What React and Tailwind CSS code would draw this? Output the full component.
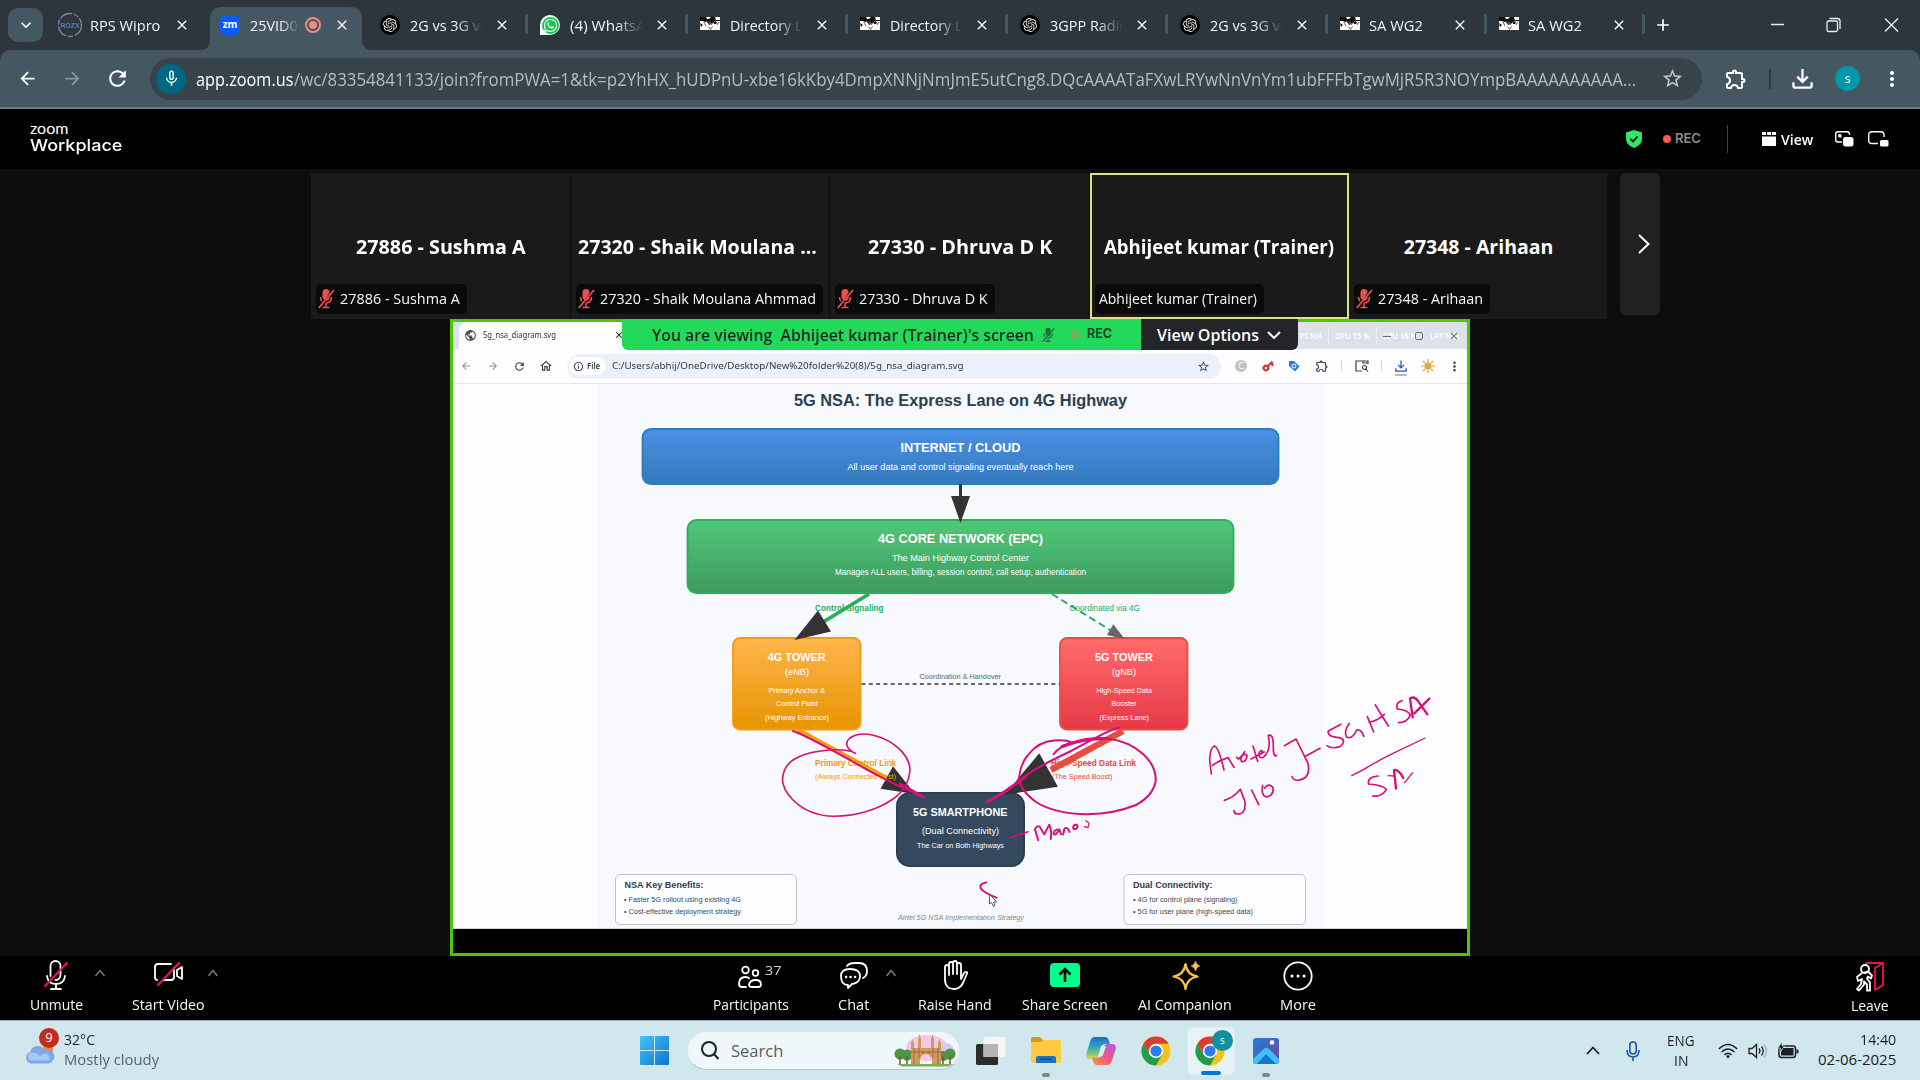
import React, { useLayoutEffect, useRef, useState } from "react";
import {
  MdArrowBack,
  MdArrowForward,
  MdRefresh,
  MdStarBorder,
  MdOutlineExtension,
  MdMoreVert,
  MdMicNone,
  MdClose,
  MdAdd,
  MdKeyboardArrowDown,
  MdOutlineHome,
  MdPublic,
  MdVpnKey,
  MdInfoOutline,
} from "react-icons/md";
import { SiOpenai } from "react-icons/si";
import { FaWhatsapp } from "react-icons/fa";

/* Text squeezed or stretched to an exact advance width. */
function Fit({ w, className = "", children }) {
  const ref = useRef(null);
  const [k, setK] = useState(1);
  useLayoutEffect(() => {
    if (ref.current) setK(w / ref.current.offsetWidth);
  }, [w]);
  return (
    <span className={"block shrink-0 whitespace-pre " + className} style={{ width: w }}>
      <span ref={ref} className="inline-block origin-left" style={{ transform: `scaleX(${k})` }}>
        {children}
      </span>
    </span>
  );
}

/* ---------- browser window ---------- */

function Gpt() {
  return (
    <span className="flex size-5 items-center justify-center rounded-full bg-black">
      <SiOpenai className="size-3.5 text-gray-200" />
    </span>
  );
}
function Gpp() {
  return (
    <svg viewBox="0 0 20 14" className="-mt-0.5 h-3.5 w-5">
      <path fill="#fff" d="M0 0h20v13H0z" />
      <path fill="#111" d="M0 0h6l1 2h2l2-2h4l1 3h4v1h-4v3h-2V5L9 8 7 5H5L3 4H0zM0 6l3 2-2 2z" />
      <path d="M4 5l2 4M9 4l3 4M15 2l2 5M6 4q5 6 9 0M17 8l2-3" stroke="#666" fill="none" />
      <path d="M8.500 9.500l2 3 2-3" stroke="#c33" fill="none" />
    </svg>
  );
}
function Rps() {
  return (
    <svg viewBox="0 0 26 26" className="-mx-[3px] size-[26px]">
      <circle cx="13" cy="13" r="11.500" fill="none" stroke="#7d8a92" strokeWidth="1.300" strokeDasharray="13 2 5 1.500" />
      <text x="3.500" y="16" fontSize="7.500" fontWeight="700" fill="#4d7fca" textLength="19" lengthAdjust="spacingAndGlyphs" fontFamily="Liberation Sans">
        ROZX
      </text>
    </svg>
  );
}
function Zm() {
  return (
    <span className="flex size-5 items-center justify-center rounded-[6px] bg-[#0b5cff] pb-0.5 text-[10px] font-bold text-white">zm</span>
  );
}
function Wa() {
  return (
    <span className="flex size-5 items-center justify-center rounded-full rounded-bl-sm bg-white">
      <span className="flex size-[17px] items-center justify-center rounded-full bg-[#19c552]">
        <FaWhatsapp className="size-[15px] text-white" />
      </span>
    </span>
  );
}

const tabs = [
  { icon: Rps, text: "RPS Wipro", w: 70, cell: "w-[160px]" },
  { icon: Zm, text: "25VID0", w: 48, cell: "w-[160px]", active: true, fade: true },
  { icon: Gpt, text: "2G vs 3G vs", w: 77, cell: "w-[160px]", fade: true },
  { icon: Wa, text: "(4) WhatsA", w: 76, cell: "w-[160px]", fade: true, sep: true },
  { icon: Gpp, text: "Directory Li", w: 76, cell: "w-[160px]", fade: true, sep: true },
  { icon: Gpp, text: "Directory Li", w: 76, cell: "w-[160px]", fade: true, sep: true },
  { icon: Gpt, text: "3GPP Radio", w: 78, cell: "w-[160px]", fade: true, sep: true },
  { icon: Gpt, text: "2G vs 3G vs", w: 77, cell: "w-[160px]", fade: true, sep: true },
  { icon: Gpp, text: "SA WG2", w: 54, cell: "w-[159px]", sep: true, narrow: true },
  { icon: Gpp, text: "SA WG2", w: 54, cell: "w-[158px]", sep: true, narrow: true },
];

function Tab({ t }) {
  const Icon = t.icon;
  return (
    <div className={"relative flex h-[50px] items-center pl-3.5 " + t.cell}>
      {t.sep && <span className="absolute -left-px top-3.5 h-5 w-[3px] rounded bg-[#455761]" />}
      {t.active && (
        <svg className="absolute -left-1.5 top-0 h-[50px] w-[172px]" viewBox="0 0 172 50">
          <path fill="#455761" d="M0 50Q10 50 10 40V20Q10 7 22 7H150Q162 7 162 20V38Q162 50 172 50Z" />
        </svg>
      )}
      <span className={"relative flex shrink-0 items-center " + (t.narrow ? "w-[29px]" : "w-[30px]")}>
        <Icon />
      </span>
      <span
        className={
          "relative overflow-hidden text-[15px] leading-5 text-gray-100 " +
          (t.active ? "w-[49px] " : t.narrow ? "w-[72px] " : "w-[73px] ") +
          (t.fade ? "[mask-image:linear-gradient(to_right,#000_62%,transparent)]" : "")
        }
      >
        <Fit w={t.w}>{t.text}</Fit>
      </span>
      {t.active && (
        <span className="relative ml-1.5 flex size-4 items-center justify-center rounded-full border-2 border-[#f28b82]">
          <span className="size-2 rounded-full bg-[#f28b82]" />
        </span>
      )}
      <MdClose className={"relative size-4 shrink-0 text-white " + (t.active ? "ml-[13px]" : "ml-[11px]")} />
    </div>
  );
}

function Download({ className }) {
  return (
    <svg viewBox="0 0 22 22" className={className} fill="none" stroke="currentColor" strokeWidth="2.400">
      <path d="M11 1v13M5.500 9l5.500 5.500L16.500 9M1.500 15v4.500q0 1 1 1h17q1 0 1-1V15" />
    </svg>
  );
}

function BrowserChrome() {
  return (
    <>
      <div className="flex h-[50px] items-center bg-[#2d363c]">
        <span className="ml-2 mr-[3px] flex h-[34px] w-[35px] shrink-0 items-center justify-center rounded-[10px] bg-[#455761]">
          <MdKeyboardArrowDown className="size-5 text-white" />
        </span>
        {tabs.map((t, i) => (
          <Tab key={i} t={t} />
        ))}
        <div className="relative flex h-[50px] w-[118px] items-center pl-2.5">
          <span className="absolute -left-px top-3.5 h-5 w-[3px] rounded bg-[#455761]" />
          <MdAdd className="size-5 text-white" />
        </div>
        <svg viewBox="0 0 140 20" className="ml-2 h-5 w-[140px]" fill="none" stroke="#eee" strokeWidth="1.300">
          <path d="M2 9.500h13M116 3.500l13 13M129 3.500l-13 13" />
          <rect x="58" y="6" width="10.500" height="10.500" rx="1.500" />
          <path d="M60.500 3.500h8q2.500 0 2.500 2.500v8" />
        </svg>
      </div>
      <div className="bg-[#2d363c]">
        <div className="flex h-[59px] items-center rounded-t-[10px] border-b-2 border-[#6b7f89] bg-[#455761]">
          <MdArrowBack className="ml-[17px] size-[21px] text-white" />
          <MdArrowForward className="ml-6 size-[21px] text-[#8b979e]" />
          <MdRefresh className="ml-[22px] size-[25px] text-white" />
          <div className="ml-5 flex h-[42px] w-[1552px] items-center rounded-full bg-[#37444b]">
            <span className="ml-1.5 flex size-[30px] items-center justify-center rounded-full bg-[#006782]">
              <MdMicNone className="size-[19px] text-white" />
            </span>
            <div className="ml-[10px] flex w-[1440px] text-[17.5px] leading-6 text-[#b3bcc1]">
              <Fit w={97.5} className="text-white">app.zoom.us</Fit>
              <Fit w={1342}>
                /wc/83354841133/join?fromPWA=1&tk=p2YhHX_hUDPnU-xbe16kKby4DmpXNNjNmJmE5utCng8.DQcAAAATaFXwLRYwNnVnYm1ubFFFbTgwMjR5R3NOYmpBAAAAAAAAAA...
              </Fit>
            </div>
            <MdStarBorder className="ml-[25px] size-[23px] text-[#c4c9cc]" />
          </div>
          <MdOutlineExtension className="ml-[22px] size-[24px] text-white" />
          <span className="ml-[21px] h-5 w-0.5 bg-[#2d3b42]" />
          <Download className="ml-[21px] size-[21px] text-white" />
          <span className="ml-[22px] flex size-[25px] items-center justify-center rounded-full bg-[#0097a7] text-xs text-white">s</span>
          <MdMoreVert className="ml-5 size-6 text-white" />
        </div>
      </div>
    </>
  );
}

/* ---------- meeting ---------- */

function MeetingHeader() {
  return (
    <div className="flex h-[60px] items-center bg-black">
      <div className="-mt-[5px] ml-[30px] flex w-[1596px] flex-col text-white">
        <Fit w={38} className="h-[14px] font-[Lato] text-[16px] leading-[13px]">zoom</Fit>
        <Fit w={93} className="h-[18px] font-['Inter'] text-[16.5px] font-medium leading-[20px]">Workplace</Fit>
      </div>
      <svg viewBox="0 0 16 18" className="h-[18px] w-4">
        <path fill="#2ee868" d="M8 0l8 2.500V9q0 6-8 9Q0 15 0 9V2.500z" />
        <path d="M4.500 9l2.500 2.500 4.500-5" stroke="#000" strokeWidth="1.800" fill="none" />
      </svg>
      <span className="ml-[21px] size-2 rounded-full bg-[#ff5a50]" />
      <Fit w={26} className="ml-1 font-[Inter] text-[13px] font-semibold text-[#8c8c8c]">REC</Fit>
      <span className="ml-[26px] h-7 w-px bg-[#444]" />
      <svg viewBox="0 0 14 14" className="ml-[34px] size-3.5" fill="#fff">
        <path d="M0 0h4v3H0zM5 0h4v3H5zM10 0h4v3h-4zM0 4.500h14V14H0z" />
      </svg>
      <Fit w={32} className="ml-[5px] text-[15px] font-semibold text-white">View</Fit>
      <svg viewBox="0 0 19 16" className="ml-[22px] h-4 w-[19px]" fill="none" stroke="#fff" strokeWidth="1.400">
        <path d="M7 11H3Q.7 11 .7 9V3Q.7.700 3 .7h9q2.500 0 2.500 2.500V4M4 4l2.500 2.500M4 6.500V4h2.500" />
        <rect x="8" y="6" width="10.500" height="9.500" rx="2.500" fill="#fff" stroke="none" />
      </svg>
      <svg viewBox="0 0 21 16" className="ml-3.5 h-4 w-[21px]" fill="none" stroke="#fff" strokeWidth="1.400">
        <path d="M10 12.500H4Q.7 12.500.7 9.500V4Q.7.700 4 .7h9Q16 .7 16 4v2" />
        <rect x="12" y="9" width="8.500" height="6.500" rx="1.500" fill="#fff" stroke="none" />
      </svg>
    </div>
  );
}

function RedMic({ className = "text-[#e8514f]" }) {
  return (
    <svg viewBox="0 0 17 20" className={"h-5 w-[17px] shrink-0 " + className} fill="none" stroke="currentColor">
      <path fill="currentColor" stroke="none" d="M4.500 3.500a3.500 3.500 0 0 1 7 0L7 11a3.500 3.500 0 0 1-2.500-3zM11.500 7v2.500Q10 12 8 12z" />
      <path strokeWidth="1.600" d="M2.500 8q0 3 1.500 4M13.500 8q0 6-5.500 6M8 14v4.500M4.500 18.500h7" />
      <path strokeWidth="1.800" d="M16 1L.7 19" />
    </svg>
  );
}

const people = [
  { name: "27886 - Sushma A", nw: 170, label: "27886 - Sushma A", lw: 120, muted: true },
  { name: "27320 - Shaik Moulana ...", nw: 239, label: "27320 - Shaik Moulana Ahmmad", lw: 216, muted: true },
  { name: "27330 - Dhruva D K", nw: 184, label: "27330 - Dhruva D K", lw: 129, muted: true },
  { name: "Abhijeet kumar (Trainer)", nw: 230, label: "Abhijeet kumar (Trainer)", lw: 158, active: true },
  { name: "27348 - Arihaan", nw: 150, label: "27348 - Arihaan", lw: 105, muted: true },
];

function Strip() {
  return (
    <div className="flex pl-[311px] pt-1">
      {people.map((p, i) => (
        <div
          key={i}
          className={
            "flex h-[146px] flex-col justify-end " +
            (p.active ? "w-[259px] border-2 border-[#dbe57b] bg-[#1a1a1a] pb-[3px] pl-[3px]" : "w-[259.5px] border-r border-[#111] bg-[#1a1a1a] pb-[5px] pl-[5px]")
          }
        >
          <div className={"flex h-[30px] justify-center " + (i === 1 ? "mr-[9px]" : "mr-[3px]")}>
            <Fit w={p.nw} className="text-[19.5px] font-bold leading-[30px] text-white">{p.name}</Fit>
          </div>
          <div className="mt-[22px] flex h-[30px] w-fit items-center gap-[5px] rounded-[5px] bg-[#0a0a0a] pl-0.5 pr-[7px]">
            {p.muted ? <RedMic /> : <span className="-mr-[3px] w-0" />}
            <Fit w={p.lw} className="-mt-0.5 text-[15px] text-gray-50">{p.label}</Fit>
          </div>
        </div>
      ))}
      <div className="ml-[12px] flex h-[142px] w-10 items-center justify-center rounded-md bg-[#212121]">
        <svg viewBox="0 0 12 20" className="ml-2 h-5 w-3" fill="none" stroke="#fff" strokeWidth="2">
          <path d="M1 1l9.500 9L1 19" />
        </svg>
      </div>
    </div>
  );
}

/* ---------- diagram ---------- */

function L({ x, y, w, s, fill = "#fff", b, i, children }) {
  return (
    <text x={x} y={y} textLength={w} lengthAdjust="spacingAndGlyphs" fontSize={s} fill={fill} fontWeight={b ? 700 : 400} fontStyle={i ? "italic" : "normal"}>
      {children}
    </text>
  );
}

function Diagram() {
  return (
    <svg viewBox="453 384 1014 544" className="h-[544px] w-full bg-[#fefdff]" fontFamily="'Liberation Sans', Arial, sans-serif">
      <defs>
        {[
          ["gb", "#4a90e2", "#357abd"],
          ["gg", "#50c878", "#3d9b5f"],
          ["go", "#ffb54d", "#e69500"],
          ["gr", "#ff6b6b", "#e63946"],
        ].map(([id, a, c]) => (
          <linearGradient key={id} id={id} x1="0" y1="0" x2="0" y2="1">
            <stop offset="0" stopColor={a} />
            <stop offset="1" stopColor={c} />
          </linearGradient>
        ))}
      </defs>
      <rect x="597" y="384" width="726.500" height="545" fill="#f7f9fc" />
      <L x={794} y={406} w={333} s={16.3} fill="#2c3e50" b>5G NSA: The Express Lane on 4G Highway</L>

      <rect x="642.500" y="429" width="636" height="55" rx="8.500" fill="url(#gb)" stroke="#2980b9" strokeWidth="1.800" />
      <L x={900.500} y={452} w={120} s={12.7} b>INTERNET / CLOUD</L>
      <L x={847.500} y={470} w={226} s={9.5}>All user data and control signaling eventually reach here</L>
      <path d="M960.500 484v13" stroke="#333" strokeWidth="3" />

      <rect x="687.500" y="520" width="546" height="73" rx="9" fill="url(#gg)" stroke="#27ae60" strokeWidth="1.800" />
      <path d="M951 496h19l-9.500 27z" fill="#333" />
      <L x={878} y={543} w={165} s={12.7} b>4G CORE NETWORK (EPC)</L>
      <L x={892} y={561} w={137} s={9.5}>The Main Highway Control Center</L>
      <L x={835} y={574.700} w={251} s={8.3}>Manages ALL users, billing, session control, call setup, authentication</L>

      <L x={815} y={611} w={68.500} s={8.3} fill="#27ae60" b>Control Signaling</L>
      <path d="M869 594L824 621.500" stroke="#27ae60" strokeWidth="3.800" />
      <L x={1069.500} y={611} w={70.500} s={8.3} fill="#27ae60">Coordinated via 4G</L>
      <path d="M1052 594l58 36" stroke="#27ae60" strokeWidth="2" strokeDasharray="7 4" />

      <rect x="733" y="638" width="127.500" height="91.500" rx="7" fill="url(#go)" stroke="#f39c12" strokeWidth="1.800" />
      <rect x="1060" y="638" width="127.500" height="91.500" rx="7" fill="url(#gr)" stroke="#e74c3c" strokeWidth="1.800" />
      <path d="M794.500 640l23.500-29.500 13 21z" fill="#333" />
      <path d="M1124.700 639l-11.400-14.700L1107 635z" fill="#666" />
      <L x={767.700} y={660.700} w={58} s={11} b>4G TOWER</L>
      <L x={785} y={674.500} w={24} s={9}>(eNB)</L>
      <L x={768.500} y={692.700} w={56.500} s={7.3}>Primary Anchor &amp;</L>
      <L x={776} y={706.300} w={42} s={7.3}>Control Point</L>
      <L x={765} y={720} w={64} s={7.3}>(Highway Entrance)</L>
      <L x={1095} y={660.700} w={58} s={11} b>5G TOWER</L>
      <L x={1112} y={674.500} w={24} s={9}>(gNB)</L>
      <L x={1096.500} y={692.700} w={55.500} s={7.3}>High-Speed Data</L>
      <L x={1111.500} y={706.300} w={25} s={7.3}>Booster</L>
      <L x={1099.500} y={720} w={49.500} s={7.3}>(Express Lane)</L>
      <path d="M861.500 684H1060" stroke="#666" strokeWidth="1.800" strokeDasharray="4 3.300" />
      <L x={919.500} y={679} w={81.500} s={7.3} fill="#666">Coordination &amp; Handover</L>

      <rect x="897" y="793" width="127" height="73" rx="13" fill="#34495e" stroke="#2c3e50" strokeWidth="2" />
      <path d="M798 730l90 49" stroke="#f39c12" strokeWidth="4.500" />
      <path d="M893 766.300l-12.500 22.400L915 794z" fill="#333" />
      <L x={815} y={765.700} w={81} s={8.3} fill="#f39c12" b>Primary Control Link</L>
      <L x={815} y={779.300} w={81} s={7.3} fill="#f39c12">(Always Connected First)</L>
      <L x={1051} y={765.700} w={85} s={8.3} fill="#e74c3c" b>High-Speed Data Link</L>
      <L x={1052} y={779.300} w={60.500} s={7.3} fill="#e74c3c">(The Speed Boost)</L>
      <path d="M1123 731l-72 39" stroke="#e74c3c" strokeWidth="6.500" />
      <path d="M1039.300 753.300l18.600 33.400-53.300 8z" fill="#333" />
      <L x={913} y={816} w={94.500} s={11.6} b>5G SMARTPHONE</L>
      <L x={922} y={833.700} w={77} s={9}>(Dual Connectivity)</L>
      <L x={917} y={848} w={87} s={7.5}>The Car on Both Highways</L>

      <rect x="615.500" y="874.500" width="181" height="50" rx="4.500" fill="#fefdff" stroke="#bdc3c7" />
      <L x={624.500} y={888.200} w={79} s={9} fill="#2c3e50" b>NSA Key Benefits:</L>
      <L x={624} y={902} w={117} s={7.3} fill="#34495e">• Faster 5G rollout using existing 4G</L>
      <L x={624} y={914} w={117} s={7.3} fill="#34495e">• Cost-effective deployment strategy</L>
      <rect x="1124" y="874.500" width="181.500" height="50" rx="4.500" fill="#fefdff" stroke="#bdc3c7" />
      <L x={1133} y={888.200} w={79.500} s={9} fill="#2c3e50" b>Dual Connectivity:</L>
      <L x={1133} y={902} w={104.500} s={7.3} fill="#34495e">• 4G for control plane (signaling)</L>
      <L x={1133} y={914} w={120} s={7.3} fill="#34495e">• 5G for user plane (high-speed data)</L>
      <L x={898} y={920} w={126} s={7.3} fill="#7f8c8d" i>Airtel 5G NSA Implementation Strategy</L>

      {/* pen annotations */}
      <g fill="none" stroke="#d80f78" strokeWidth="1.600" strokeLinecap="round" strokeLinejoin="round">
        <path d="M855.400 753.500C845 748 845 742 850 738C857 733 868 732.500 882 738C899 745 910 758 910 770C909 783 903 792 893 799C877 810 855 816 834 816.300C815 816 803 810 793 800C786 793 782.500 786 782.500 779C783 771 786 765 793 760C802 754 812 752 821 751C832 749.500 843 749 852 751.500" />
        <path strokeWidth="2" d="M793 731C805 735 830 749 850 760C875 775 900 787 923 797" />
        <path strokeWidth="3" d="M900 784l23 12.700" />
        <path strokeWidth="2" d="M1053.600 754.300C1058 748 1066 744 1075 741.700C1085 738.500 1095 738 1107 738.500C1120 740 1133 745 1143 754C1152 762 1156 772 1155.700 781C1154 791 1147 799 1136 805C1121 811 1104 814 1087.500 814.300C1068 814 1050 811 1036 802C1025 794 1019.500 787 1019 778C1020 768 1022 762 1028 755C1035 746 1044 741 1054 740.500C1061 740 1067 740 1071.400 742.500" />
        <path strokeWidth="2" d="M1119.600 727.500C1112 728 1090 741 1071 751C1046 763 1030 771 1018 782C1008 791 998 797 986 802.500" />
        <path strokeWidth="3" d="M1026 776C1014 786 1006 792 988 801.500M1107 738.500q-25 0-45 8" />
        <path d="M1010 837.700l18-6" />
        <g transform="translate(600 700) scale(.35714 .33333)" strokeWidth="5.500">
          <path d="M1218 388L1227 421M1217 390Q1224 374 1231 380L1244 403L1258 374Q1266 395 1262 417M1286 388Q1271 388 1270 401Q1274 411 1286 388L1291 403M1297 404L1300 387Q1309 378 1315 396M1329 374Q1322 382 1327 388Q1337 388 1337 378Q1334 371 1328 376" />
          <path strokeWidth="3.500" d="M1360 362Q1374 368 1366 383L1356 380" />
          <path d="M1082 547Q1058 552 1068 568Q1080 580 1110 593" />
        </g>
        <g transform="translate(1150 660) scale(.33333)" strokeWidth="5">
          <path d="M184 342L179 300Q180 262 194 258Q206 262 222 330M188 316Q210 300 234 293L252 322M260 292L266 297Q283 277 291 286Q290 306 276 305Q266 299 284 275M309 258L323 304M303 297Q320 288 343 276M326 283Q340 280 336 272Q326 272 327 286Q330 298 342 290Q364 270 355 226Q371 220 370 262Q370 294 380 286" />
          <path d="M403 257L438 237L474 310Q482 350 455 358Q430 366 426 350M468 288L510 265" />
          <path d="M573 193L535 213Q530 230 568 233Q592 240 570 260Q545 268 531 257M598 190Q580 215 590 232Q608 238 620 210Q635 208 641 229M652 170L671 216M676 135L715 198M657 186Q680 184 703 163" />
          <path d="M756 122Q735 128 742 147Q775 150 781 166Q770 188 746 188" />
          <path strokeWidth="7" d="M788 172L780 115Q794 108 803 122L832 163M838 116L793 160" />
          <path strokeWidth="4" d="M605 347Q640 330 660 317Q690 300 715 287L825 234" />
          <path d="M684 348Q650 352 656 372Q700 376 709 388Q695 412 668 408" />
          <path strokeWidth="7" d="M738 386L732 330Q745 326 760 354" />
          <path strokeWidth="4" d="M714 347L732 348M788 338L764 368" />
          <path d="M223 421Q250 414 271 388L285 425Q288 465 262 462Q251 460 252 452M305 390L326 434M338 376Q332 408 350 411Q372 406 369 382Q355 368 344 384" />
        </g>
      </g>
      <path d="M989.500 894v10l2-1.500 2 4 1.500-1-1.500-3.500h3z" fill="#fff" stroke="#333" strokeWidth=".8" />
    </svg>
  );
}

function SharedWindow() {
  return (
    <div className="relative ml-[450px] flex h-[637px] w-[1020px] flex-col border-[3px] border-[#4cc800] bg-black">
      <div className="absolute -top-[3px] left-[169px] z-10 flex h-[31px] overflow-hidden rounded-b-md">
        <div className="flex w-[519px] items-center bg-[#23d959] pl-[30px] text-[#1c2a20]">
          <Fit w={382} className="text-[16px] font-semibold">{"You are viewing  Abhijeet kumar (Trainer)'s screen"}</Fit>
          <RedMic className="ml-1.5 scale-75 text-[#1c6e36]" />
          <span className="ml-[14px] size-2 rounded-full bg-[#85a95c]" />
          <Fit w={25} className="ml-2 font-[Inter] text-[12.5px] font-bold text-[#1b4b2b]">REC</Fit>
        </div>
        <div className="flex w-[157px] items-center bg-[#242528] pl-[16px] text-white">
          <Fit w={102} className="text-[16px] font-semibold">View Options</Fit>
          <svg viewBox="0 0 14 8" className="ml-2 h-2 w-3.5" fill="none" stroke="#fff" strokeWidth="2">
            <path d="M1 1l6 6 6-6" />
          </svg>
        </div>
      </div>
      <div className="flex h-[27px] shrink-0 items-center bg-[#dde1ea]">
        <div className="ml-1.5 flex h-[27px] w-[200px] items-center rounded-tl-lg bg-[#fefdff] pl-1 pb-px">
          <MdPublic className="ml-px size-[13px] text-[#50555c]" />
          <Fit w={73} className="ml-1.5 font-['Noto_Sans'] text-[9px] text-[#333]">5g_nsa_diagram.svg</Fit>
          <MdClose className="ml-[58px] size-2.5 text-black" />
        </div>
        <div className="ml-[641px] flex items-center gap-[6px] text-[8px] font-semibold leading-3 text-white">
          <Fit w={22}>PS N/A</Fit>
          <span className="h-5 w-px bg-[#eceef3]" />
          <Fit w={35}>GPU 15 %</Fit>
          <span className="h-5 w-px bg-[#eceef3]" />
          <div className="relative flex w-[34px]">
            <Fit w={34}>CPU 16 %</Fit>
            <span className="absolute left-0 top-1.5 h-px w-2 bg-gray-500" />
            <span className="absolute left-[32px] top-0.5 size-2 rounded-xs border border-gray-500" />
          </div>
          <span className="h-5 w-px bg-[#eceef3]" />
          <div className="relative flex w-[29px]">
            <Fit w={29}>LAT N/A</Fit>
            <MdClose className="absolute left-[18px] top-0 size-3 text-gray-500" />
          </div>
        </div>
      </div>
      <div className="flex h-[35px] shrink-0 items-center border-b border-[#e2e4e8] bg-[#fefdff]">
        <MdArrowBack className="ml-[7px] size-3 text-[#8a8f96]" />
        <MdArrowForward className="ml-[15px] size-3 text-[#8a8f96]" />
        <MdRefresh className="ml-[14px] size-[13px] text-[#3c4043]" />
        <MdOutlineHome className="ml-[13px] size-[14px] text-[#3c4043]" />
        <div className="ml-3.5 flex h-[25px] w-[654px] items-center rounded-full bg-[#ebf1fa]">
          <span className="ml-0.5 flex h-[18px] w-[37px] items-center rounded-full bg-white pl-1">
            <MdInfoOutline className="size-[11px] text-[#333]" />
            <Fit w={13} className="ml-[3px] text-[9px] font-semibold leading-3 text-[#333]">File</Fit>
          </span>
          <Fit w={352} className="ml-[6px] font-['Noto_Sans'] text-[9.7px] text-[#33373c]">C:/Users/abhij/OneDrive/Desktop/New%20folder%20(8)/5g_nsa_diagram.svg</Fit>
          <MdStarBorder className="ml-[233px] size-[13px] text-[#444]" />
        </div>
        <span className="ml-[14px] flex size-3 items-center justify-center rounded-full bg-[#c3c3c3] text-[9px] leading-3 text-white">C</span>
        <MdVpnKey className="ml-[14px] size-[14px] -rotate-45 text-[#d63a3a]" />
        <svg viewBox="0 0 12 12" className="ml-[13px] size-3">
          <path fill="#2a78e4" d="M1 1h5l5.500 5.500-4.500 5L1 6z" />
          <circle cx="6" cy="6" r="2" fill="none" stroke="#fff" />
        </svg>
        <MdOutlineExtension className="ml-[15px] size-[14px] text-[#3c4043]" />
        <span className="ml-[12px] h-3 w-px bg-[#c6dafc]" />
        <svg viewBox="0 0 14 12" className="ml-[13px] h-3 w-3.5" fill="none" stroke="#3c4043" strokeWidth="1.200">
          <path d="M7 11H1V1h12v3M8 1v2h5" />
          <circle cx="9.500" cy="7.500" r="2" />
          <path d="M11 9l2 2.500" />
        </svg>
        <span className="ml-[12px] h-3 w-px bg-[#c6dafc]" />
        <span className="ml-[13px] mt-1 flex flex-col items-center gap-0.5">
          <Download className="size-3 text-[#1d5fc4]" />
          <span className="h-0.5 w-3 bg-[#bbb]" />
        </span>
        <svg viewBox="0 0 14 14" className="ml-[14px] size-3.5" stroke="#dba23c" strokeWidth="1.200">
          <circle cx="7" cy="7" r="3" fill="#e5a93c" />
          <path d="M7 0v3M7 11v3M0 7h3M11 7h3M2 2l2 2M10 10l2 2M12 2l-2 2M4 10l-2 2" />
        </svg>
        <MdMoreVert className="ml-[12px] size-[15px] text-[#3c4043]" />
      </div>
      <Diagram />
      <div className="h-px bg-[#cfd2d6]" />
    </div>
  );
}

/* ---------- meeting controls ---------- */

function Control({ cell, w, label, leave, children }) {
  return (
    <div className={"flex flex-col items-center " + cell}>
      <div className="flex h-[38px] items-center justify-center">{children}</div>
      <Fit w={w} className={"text-[15px] leading-[22px] text-gray-50 " + (leave ? "" : "-mt-px")}>{label}</Fit>
    </div>
  );
}
function Caret({ className = "" }) {
  return (
    <svg viewBox="0 0 12 8" className={"mt-[13px] h-2 w-3 shrink-0 " + className} fill="none" stroke="#777" strokeWidth="1.500">
      <path d="M1.500 7L6 1.500 10.500 7" />
    </svg>
  );
}

function Controls() {
  const s = { fill: "none", stroke: "#fff", strokeWidth: 1.8, strokeLinecap: "round", strokeLinejoin: "round" };
  return (
    <div className="flex h-16 items-start bg-black">
      <Control cell="ml-[16px] w-20" w={53} label="Unmute">
        <svg viewBox="0 0 24 30" className="h-[30px] w-6" {...s}>
          <path d="M6.500 16V6a5 5 0 0 1 10 0v9a5 5 0 0 1-5 5M3 16q1 8 9 8t9-8M12 24v5M7 29h10" />
          <path d="M23 3L1 26" stroke="#f0104f" strokeWidth="2.200" />
        </svg>
      </Control>
      <Caret className="-ml-[2px]" />
      <Control cell="ml-[18px] w-[88px]" w={73} label="Start Video">
        <svg viewBox="0 0 29 24" className="-mt-[2px] h-6 w-[29px]" {...s}>
          <path d="M3 18Q1 18 1 15V5Q1 2 4 2h13M20 6v9q0 3-3 3H9M23 8l5-3v12l-5-3z" />
          <path d="M25 1L4 23" stroke="#f0104f" strokeWidth="2.200" />
        </svg>
      </Control>
      <Caret className="-ml-[5px]" />
      <Control cell="ml-[483px] w-[98px]" w={76} label="Participants">
        <div className="flex translate-x-2 gap-[3px]">
          <svg viewBox="0 0 24 24" className="mt-1 h-6 w-6" {...s}>
            <circle cx="7.500" cy="5" r="3.300" />
            <circle cx="17.500" cy="8" r="2.800" />
            <path d="M8 22H4Q1 22 1 19q0-7 6.500-7 2.500 0 3.500 1.200M14 22h6q3 0 3-2.500 0-4.500-5.500-4.500T11 19.500q0 2.500 3 2.500z" />
          </svg>
          <Fit w={16} className="-mt-0.5 text-[13.5px] leading-[22px] text-gray-300">37</Fit>
        </div>
      </Control>
      <Control cell="ml-[21px] w-[64px]" w={31} label="Chat">
        <svg viewBox="0 0 29 28" className="mt-0.5 h-7 w-[29px]" {...s}>
          <path d="M8 4q2-3 8-3h4q8 0 8 8 0 5-4 7M2 14q0-7 9-7 10 0 10 7t-8 8l-4 4v-3Q2 23 2 14z" />
          <path d="M7 15h.1M11.500 15h.1M16 15h.1" strokeWidth="2.500" />
        </svg>
      </Control>
      <Caret />
      <Control cell="ml-[11px] w-[94px]" w={74} label="Raise Hand">
        <svg viewBox="0 0 25 30" className="h-[30px] w-[25px]" {...s}>
          <path d="M2 19V7q0-2 1.700-2T6 7v8V4q0-2 2-2t2 2v10V3q0-2 2-2t2 2v11V5q0-2 2-2t2 2v14l3-6q1.500-2 3.500-.500L20 23q-3 6-9 6-9 0-9-10z" />
        </svg>
      </Control>
      <Control cell="ml-[6px] w-[114px]" w={86} label="Share Screen">
        <span className="flex h-6 w-[30px] items-center justify-center rounded-[4px] bg-[#00ff8c]">
          <svg viewBox="0 0 16 16" className="size-4" fill="none" stroke="#000" strokeWidth="2.600">
            <path d="M8 15V2M2.500 7.500L8 2l5.500 5.500" />
          </svg>
        </span>
      </Control>
      <Control cell="ml-[3px] w-[120px]" w={94} label="AI Companion">
        <svg viewBox="0 0 29 29" className="ml-0.5 size-[29px]" fill="none" stroke="#f5c543" strokeWidth="2.200" strokeLinejoin="round">
          <path d="M13.500 3q1.500 11 12 12.500Q15 17 13.500 28 12 17 1.500 15.500 12 14 13.500 3z" />
          <path d="M23.500 0q1 4 4.500 5-3.500 1-4.500 5-1-4-4.500-5 3.500-1 4.500-5z" fill="#f5c543" strokeWidth=".5" />
        </svg>
      </Control>
      <Control cell="ml-[13px] w-20" w={36} label="More">
        <svg viewBox="0 0 30 30" className="mt-0.5 size-[30px]" {...s}>
          <circle cx="15" cy="15" r="13.700" />
          <path d="M9 15h.1M15 15h.1M21 15h.1" strokeWidth="3" />
        </svg>
      </Control>
      <Control cell="ml-auto mr-[20px] w-[60px]" w={38} label="Leave" leave>
        <svg viewBox="0 0 30 30" className="mt-1 size-[30px]" {...s}>
          <circle cx="10" cy="7" r="4" />
          <path d="M7 11L2 15l1 4 4-2-1 5-4 5 2 1.500 5-6v-3l3 3v6h3v-8l-3-4 1-2 3 2 1-3-4-4z" />
          <path stroke="#f0104f" d="M11 1h17v22l-8 5V6l8-5" />
        </svg>
      </Control>
    </div>
  );
}

/* ---------- taskbar ---------- */

function ChromeLogo() {
  return (
    <svg viewBox="0 0 30 30" className="size-[30px]">
      <circle cx="15" cy="15" r="14.500" fill="#fbc116" />
      <path fill="#dc3d31" d="M2.440 7.750A14.500 14.500 0 0 1 27.560 7.750H15L8.700 18.600z" />
      <path fill="#1f9d4d" d="M2.440 7.750A14.500 14.500 0 0 0 15 29.500L21.300 18.600H8.700z" />
      <circle cx="15" cy="15" r="7.200" fill="#fff" />
      <circle cx="15" cy="15" r="5.600" fill="#2f7bea" />
    </svg>
  );
}

function Castle() {
  return (
    <svg viewBox="0 0 62 33" className="h-[33px] w-[62px]">
      <ellipse cx="33" cy="14" rx="21" ry="13" fill="#f1c9e6" />
      <ellipse cx="51" cy="18" rx="10" ry="9" fill="#d9c9ee" />
      <g fill="#4d9443">
        <circle cx="6" cy="20" r="5.500" />
        <circle cx="13" cy="21" r="5.500" />
        <circle cx="49" cy="22" r="5" />
        <circle cx="56" cy="20" r="5.500" />
      </g>
      <path stroke="#7a5632" strokeWidth="1.500" d="M6 22v9M13 22v9M49 22v9M56 22v9" />
      <path fill="#d09a5a" d="M17 31V9l1.500-4L20 9v5h4V5l1.500-5L27 5v9h10V5l1.500-5L40 5v9h4V9l1.500-4L47 9v22h-9v-5a6 6 0 0 0-12 0v5z" />
      <path stroke="#9a6838" fill="none" d="M17 18h30M20 14v17M44 14v17M25 14v10M39 14v10M29 17v3M35 17v3" />
      <path fill="#79ad4d" d="M3 30h56l-5 2.500H8z" />
    </svg>
  );
}

function Taskbar() {
  return (
    <div className="flex h-[60px] items-center border-t border-[#a3adb0] bg-[#cfe7ed] text-[#1c2022]">
      <div className="relative ml-[25px] h-[58px] w-[30px]">
        <svg viewBox="0 0 30 22" className="absolute left-0 top-5 h-[23px] w-[30px]">
          <circle cx="23" cy="7" r="5" fill="#f08a24" />
          <path fill="#7fa8ea" d="M6 21a6 6 0 0 1-1-11.500A8.500 8.500 0 0 1 20 7a7 7 0 0 1 4 14z" />
          <path fill="#a8c9f7" d="M7 18a4 4 0 0 1 0-8q6 0 8 4 2-3 6-3a4 4 0 0 1 2 7z" />
        </svg>
        <span className="absolute left-3.5 top-[6px] flex size-5 items-center justify-center rounded-full bg-[#c42b1c] text-[13px] text-white">9</span>
      </div>
      <div className="-mt-1 ml-[9px] w-[576px]">
        <Fit w={31} className="text-[15px] leading-5">32°C</Fit>
        <Fit w={95} className="text-[15px] leading-5 text-[#57636a]">Mostly cloudy</Fit>
      </div>
      <svg viewBox="0 0 29 29" className="size-[29px]">
        <defs>
          <linearGradient id="wl" x1="0" y1="0" x2="1" y2="1">
            <stop stopColor="#45c5f5" />
            <stop offset="1" stopColor="#0a74d1" />
          </linearGradient>
        </defs>
        <path fill="url(#wl)" d="M0 1q0-1 1-1h13v14H0zM15 0h13q1 0 1 1v13H15zM0 15h14v14H1q-1 0-1-1zM15 15h14v13q0 1-1 1H15z" />
      </svg>
      <div className="ml-[18px] flex h-[39px] w-[273px] items-center rounded-full border border-b-[#b3c6cb] border-[#dbe8ec] bg-[#eff7fa]">
        <svg viewBox="0 0 18 19" className="ml-[13px] h-[19px] w-[18px]" fill="none" stroke="#1c2022" strokeWidth="2">
          <circle cx="8" cy="8" r="7" />
          <path d="M13 13l4.500 5" />
        </svg>
        <Fit w={52} className="ml-[12px] text-[16.5px] leading-6 text-[#565d61]">Search</Fit>
        <span className="ml-[111px]">
          <Castle />
        </span>
      </div>
      <svg viewBox="0 0 30 28" className="ml-4 h-7 w-[30px]">
        <rect y="7" width="22" height="21" rx="1.500" fill="#2c2c2c" />
        <rect x="7.500" width="22" height="20" rx="1.500" fill="#f5f5f5" />
        <path fill="#b5b5b5" d="M7.500 7H22v13H7.500z" />
      </svg>
      <div className="relative ml-[25px] flex h-[58px] items-center">
        <svg viewBox="0 0 30 27" className="h-[27px] w-[30px]">
          <path fill="#dc9614" d="M0 2q0-2 2-2h7l3 3v5H0z" />
          <path fill="#fccb3f" d="M0 5h10l2-2h16q2 0 2 2v19q0 2-2 2H2q-2 0-2-2z" />
          <path fill="#1c74c9" d="M5 26v-5q0-2 2-2h16q2 0 2 2v5z" />
          <path stroke="#0b4f92" strokeWidth="1.500" d="M9 22h12" />
        </svg>
        <span className="absolute bottom-[3px] left-[11px] h-1 w-2 rounded-full bg-[#7b878b]" />
      </div>
      <svg viewBox="0 0 30 28" className="ml-[25px] h-7 w-[30px]">
        <defs>
          <linearGradient id="ca" x1="0" y1="0" x2="0" y2="1">
            <stop stopColor="#2169d8" />
            <stop offset=".5" stopColor="#2bb1b6" />
            <stop offset="1" stopColor="#e8d431" />
          </linearGradient>
          <linearGradient id="cb" x1="1" y1="0" x2="0" y2="1">
            <stop stopColor="#a45fe8" />
            <stop offset=".5" stopColor="#ef5687" />
            <stop offset="1" stopColor="#f79a3e" />
          </linearGradient>
        </defs>
        <path fill="url(#ca)" d="M9 0h10q3 0 4 4l1 3h-5q-3 0-4 4l-2 7q-1 4-5 4H4q-5 0-3.500-6L4 5Q5 0 9 0z" />
        <path fill="url(#cb)" d="M21 28H11q-3 0-4-4l-1-3h5q3 0 4-4l2-6q1-4 5-4h4q5 0 3.500 6L26 23q-1 5-5 5z" />
        <path fill="#dcecf1" d="M15 9h5l-3 9q-1 2-5 2z" />
      </svg>
      <span className="ml-[25px]">
        <ChromeLogo />
      </span>
      <div className="relative ml-4 flex h-12 w-12 items-center justify-center rounded-[5px] border border-[#dcebef] bg-[#e6f2f6]">
        <span className="mr-0.5">
          <ChromeLogo />
        </span>
        <span className="absolute left-[24px] top-[2px] flex size-[21px] items-center justify-center rounded-full bg-[#12919f] text-[10px] text-white">s</span>
        <span className="absolute -bottom-px left-[13px] h-1 w-5 rounded-full bg-[#0a74d1]" />
      </div>
      <div className="relative ml-[18px] flex h-[58px] items-center">
        <svg viewBox="0 0 26 26" className="size-[26px]">
          <defs>
            <linearGradient id="ph" x1="0" y1="0" x2="1" y2="1">
              <stop stopColor="#1b82d8" />
              <stop offset="1" stopColor="#7c3f9e" />
            </linearGradient>
          </defs>
          <rect width="26" height="26" rx="3" fill="url(#ph)" />
          <path fill="#3dc1f5" d="M0 21L12 10q1.500-1 3 0L26 21v3q0 2-2 2H2q-2 0-2-2z" />
          <path fill="#1478cf" d="M13 16l10 10H4z" />
          <circle cx="19" cy="4.500" r="2.300" fill="#fff" />
        </svg>
        <span className="absolute bottom-[3px] left-[9px] h-1 w-2 rounded-full bg-[#7b878b]" />
      </div>
      <svg viewBox="0 0 14 9" className="ml-[307px] h-[9px] w-3.5" fill="none" stroke="#1c2022" strokeWidth="1.800">
        <path d="M1 8l6-6.500L13 8" />
      </svg>
      <svg viewBox="0 0 14 20" className="ml-[26px] h-5 w-3.5" fill="none" stroke="#1a55a5" strokeWidth="1.600">
        <rect x="3.800" y="1" width="6.400" height="12" rx="3.200" />
        <path d="M1 9q0 7 6 7t6-7M7 16v4" />
      </svg>
      <div className="-mt-0.5 ml-[27px] flex w-7 flex-col items-center">
        <Fit w={28} className="text-[15px] leading-5">ENG</Fit>
        <Fit w={14} className="text-[15px] leading-5">IN</Fit>
      </div>
      <svg viewBox="0 0 20 16" className="ml-[23px] h-4 w-5" fill="none" stroke="#1c2022" strokeWidth="1.500">
        <path d="M.8 6q9.200-9 18.400 0M3.600 9q6.400-6 12.800 0M6.500 12q3.500-3.500 7 0" />
        <circle cx="10" cy="13.500" r="1.500" fill="#1c2022" stroke="none" />
      </svg>
      <svg viewBox="0 0 20 16" className="ml-2.5 h-4 w-5" fill="none" stroke="#1c2022" strokeWidth="1.300">
        <path d="M1 5.500h3L8.500 1.500v13L4 10.500H1zM11 5.500q2 2.500 0 5M13.500 3.500q3.500 4.500 0 9" />
        <path stroke="#9db0b5" d="M16 1.500q5 6.500 0 13" />
      </svg>
      <svg viewBox="0 0 21 17" className="ml-2.5 h-[17px] w-[21px]">
        <rect x="1" y="4" width="16.500" height="11.500" rx="2.500" fill="none" stroke="#1c2022" strokeWidth="1.500" />
        <path fill="#1c2022" d="M5 6h10.500v7.500H3V10zM18.500 7.500h1q1 0 1 1v2q0 1-1 1h-1z" />
        <path fill="#1c2022" stroke="#cfe7ed" strokeWidth=".6" d="M4 0L0 6h2.500L2 10l4.500-6H4z" />
      </svg>
      <div className="-mt-1 ml-[19px] flex w-[78px] flex-col items-end">
        <Fit w={36} className="text-[15px] leading-5">14:40</Fit>
        <Fit w={78} className="text-[15px] leading-5">02-06-2025</Fit>
      </div>
    </div>
  );
}

export default function App() {
  return (
    <div className="flex h-[1080px] w-[1920px] flex-col overflow-hidden bg-black font-['Open_Sans','Noto_Sans',sans-serif]">
      <BrowserChrome />
      <MeetingHeader />
      <div className="h-[787px] bg-[#0d0d0d]">
        <Strip />
        <SharedWindow />
      </div>
      <Controls />
      <Taskbar />
    </div>
  );
}
